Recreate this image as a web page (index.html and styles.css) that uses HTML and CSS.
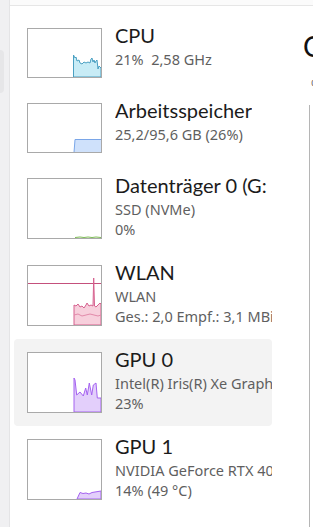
FILE: index.html
```html
<!DOCTYPE html>
<html lang="de">
<head>
<meta charset="utf-8">
<title>Leistung</title>
<link rel="stylesheet" href="styles.css">
</head>
<body>
<div class="app">
  <nav class="nav"><div class="nav-item"></div></nav>
  <main class="main">
    <div class="topbar"></div>
    <div class="content">
      <ul class="list">
        <li class="item">
          <div class="thumb">
            <svg width="73" height="48" viewBox="0 0 73 48"><polygon class="cpu" points="45.5,48 45.5,26 47,29 48,28 49,32 51,31 52,34 54,35 56,33 58,34 60,33 62,34 63,30 64,29 65,33 66,31 67,34 68,32 69,31 70,40 71,37 73,39 73,48"/></svg>
          </div>
          <div class="text">
            <div class="title">CPU</div>
            <div class="sub">21%&nbsp;&nbsp;2,58 GHz</div>
          </div>
        </li>
        <li class="item">
          <div class="thumb">
            <svg width="73" height="48" viewBox="0 0 73 48"><polygon class="mem" points="46,48.5 47,35.5 73.5,35.5 73.5,48.5"/></svg>
          </div>
          <div class="text">
            <div class="title">Arbeitsspeicher</div>
            <div class="sub">25,2/95,6 GB (26%)</div>
          </div>
        </li>
        <li class="item tall">
          <div class="thumb">
            <svg width="73" height="59" viewBox="0 0 73 59"><polyline class="disk" points="47,58.5 52,58 56,58.5 60,58 64,58.5 68,58 73,58.5"/></svg>
          </div>
          <div class="text">
            <div class="title">Datenträger 0 (G: C:)</div>
            <div class="sub">SSD (NVMe)</div>
            <div class="sub">0%</div>
          </div>
        </li>
        <li class="item tall">
          <div class="thumb">
            <svg width="73" height="59" viewBox="0 0 73 59">
              <line class="wlan-line" x1="0" y1="17.5" x2="73" y2="17.5"/>
              <polygon class="wlan" points="46,59 46,39 48,40 50,38 52,41 54,40 56,42 58,39 59,37 61,40 63,39 65,40 65.7,12 66.5,40 68,41 70,39 72,37 73,38 73,59"/>
              <polyline class="wlan-low" points="46,49 50,48 54,50 58,49 62,48 66,49 70,50 73,49"/>
            </svg>
          </div>
          <div class="text">
            <div class="title">WLAN</div>
            <div class="sub">WLAN</div>
            <div class="sub">Ges.: 2,0 Empf.: 3,1 MBit/s</div>
          </div>
        </li>
        <li class="item tall selected">
          <div class="thumb">
            <svg width="73" height="59" viewBox="0 0 73 59"><polygon class="gpu" points="46,59 46,25 47,27 48.7,42 52,39 55.3,43 57.7,35 59.3,42 61.3,30 63.7,42 65.3,32 68,30 69.3,45 73,45 73,59"/></svg>
          </div>
          <div class="text">
            <div class="title">GPU 0</div>
            <div class="sub">Intel(R) Iris(R) Xe Graphics</div>
            <div class="sub">23%</div>
          </div>
        </li>
        <li class="item tall">
          <div class="thumb">
            <svg width="73" height="59" viewBox="0 0 73 59"><polygon class="gpu" points="49,59 52,52.5 55,53.5 58,53 61,54 64,52.5 67,52 70,51.5 73,51 73,59"/></svg>
          </div>
          <div class="text">
            <div class="title">GPU 1</div>
            <div class="sub">NVIDIA GeForce RTX 4060</div>
            <div class="sub">14% (49 °C)</div>
          </div>
        </li>
      </ul>
      <section class="detail">
        <h1 class="detail-title">CPU</h1>
        <div class="detail-label">% Auslastung</div>
        <div class="detail-graph"></div>
      </section>
    </div>
  </main>
</div>
</body>
</html>
```

FILE: styles.css
```css
html, body {
  margin: 0;
  padding: 0;
}
body {
  width: 313px;
  height: 527px;
  overflow: hidden;
  background: #ffffff;
  font-family: "Noto Sans", "Open Sans", sans-serif;
}
.app {
  display: flex;
  height: 527px;
}
.nav {
  width: 9px;
  flex: none;
  background: #f0f0f2;
  border-right: 1px solid #e4e4e6;
  padding-top: 50px;
  box-sizing: content-box;
}
.nav-item {
  width: 4px;
  height: 43px;
  background: #e6e6e8;
  border-radius: 0 4px 4px 0;
}
.main {
  flex: 1;
  min-width: 0;
  display: flex;
  flex-direction: column;
}
.topbar {
  height: 5px;
  background: #fbfbfb;
  border-bottom: 1px solid #e6e6e6;
}
.content {
  flex: 1;
  display: flex;
  overflow: hidden;
}
.list {
  list-style: none;
  margin: 0;
  padding: 9px 0 0 4px;
  width: 258px;
  flex: none;
}
.item {
  display: flex;
  gap: 13px;
  padding: 13px 0 12px 13px;
  overflow: hidden;
  white-space: nowrap;
}
.item.tall {
  padding-bottom: 13px;
}
.item.selected {
  background: #f3f3f3;
  border-radius: 4px;
}
.thumb {
  width: 73px;
  height: 48px;
  flex: none;
  border: 1px solid #a9a9a9;
  background: #ffffff;
}
.tall .thumb {
  height: 59px;
}
.thumb svg {
  display: block;
}
.text {
  min-width: 0;
  overflow: hidden;
}
.title {
  font-family: Lato, "Noto Sans", sans-serif;
  font-size: 20px;
  line-height: 22px;
  margin-top: -4px;
  color: #1b1b1b;
  margin-bottom: 4px;
}
.sub {
  font-size: 14.5px;
  line-height: 19.5px;
  color: #5f5f5f;
}
.cpu {
  fill: #c8ecf6;
  stroke: #4aa0c2;
  stroke-width: 1;
}
.mem {
  fill: #cfe1fb;
  stroke: #7aa6e8;
  stroke-width: 1;
}
.disk {
  fill: none;
  stroke: #7dbb55;
  stroke-width: 1;
}
.wlan-line {
  stroke: #c4507c;
  stroke-width: 1;
}
.wlan {
  fill: #f7cfdc;
  stroke: #d6608e;
  stroke-width: 1;
}
.wlan-low {
  fill: none;
  stroke: #e28aaa;
  stroke-width: 1;
}
.gpu {
  fill: #e3cffb;
  stroke: #a462f0;
  stroke-width: 1;
}
.detail {
  margin-left: 31px;
  padding-top: 22px;
  flex: none;
  width: 200px;
}
.detail-title {
  margin: 0;
  font-family: Lato, "Noto Sans", sans-serif;
  font-weight: 400;
  font-size: 28px;
  line-height: 36px;
  color: #111111;
}
.detail-label {
  margin-top: 14px;
  font-size: 12px;
  line-height: 14px;
  color: #666666;
  padding-left: 8px;
}
.detail-graph {
  margin-top: 13px;
  margin-left: 6px;
  height: 430px;
  border-left: 1px solid #b5b5b5;
}
```
